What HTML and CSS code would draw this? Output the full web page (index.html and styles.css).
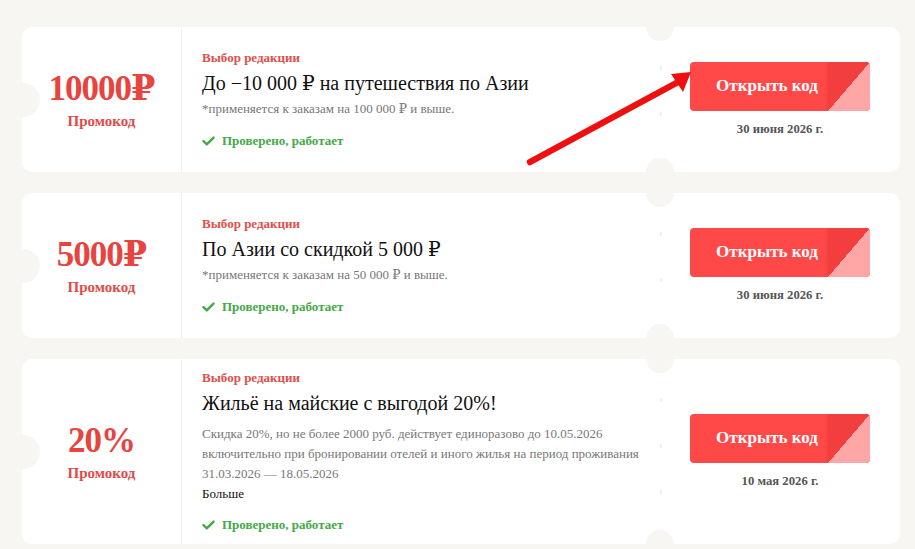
FILE: index.html
```html
<!DOCTYPE html>
<html lang="ru">
<head>
  <meta charset="UTF-8" />
  <meta name="viewport" content="width=device-width, initial-scale=1" />
  <title>Промокоды</title>
  <link rel="stylesheet" href="styles.css">
</head>
<body>

  <div class="coupons">

    <div class="coupon">
      <div class="coupon-value">
        <div class="amount">10000₽</div>
        <div class="kind">Промокод</div>
      </div>
      <div class="coupon-info">
        <div class="label">Выбор редакции</div>
        <div class="title">До −10 000 ₽ на путешествия по Азии</div>
        <div class="note">*применяется к заказам на 100 000 ₽ и выше.</div>
        <div class="checked">
          <svg width="13" height="10" viewBox="0 0 13 10" fill="none" stroke="currentColor" stroke-width="2.4" stroke-linecap="round" stroke-linejoin="round">
            <path d="M1.5 5.2 4.8 8.4 11.5 1.6"></path>
          </svg>
          Проверено, работает
        </div>
      </div>
      <div class="coupon-action">
        <button class="open-btn">Открыть код</button>
        <div class="expire">30 июня 2026 г.</div>
      </div>
    </div>

    <div class="coupon">
      <div class="coupon-value">
        <div class="amount">5000₽</div>
        <div class="kind">Промокод</div>
      </div>
      <div class="coupon-info">
        <div class="label">Выбор редакции</div>
        <div class="title">По Азии со скидкой 5 000 ₽</div>
        <div class="note">*применяется к заказам на 50 000 ₽ и выше.</div>
        <div class="checked">
          <svg width="13" height="10" viewBox="0 0 13 10" fill="none" stroke="currentColor" stroke-width="2.4" stroke-linecap="round" stroke-linejoin="round">
            <path d="M1.5 5.2 4.8 8.4 11.5 1.6"></path>
          </svg>
          Проверено, работает
        </div>
      </div>
      <div class="coupon-action">
        <button class="open-btn">Открыть код</button>
        <div class="expire">30 июня 2026 г.</div>
      </div>
    </div>

    <div class="coupon">
      <div class="coupon-value">
        <div class="amount">20%</div>
        <div class="kind">Промокод</div>
      </div>
      <div class="coupon-info">
        <div class="label">Выбор редакции</div>
        <div class="title">Жильё на майские с выгодой 20%!</div>
        <div class="desc">Скидка 20%, но не более 2000 руб. действует единоразово до 10.05.2026 включительно при бронировании отелей и иного жилья на период проживания 31.03.2026 — 18.05.2026</div>
        <div class="more">Больше</div>
        <div class="checked">
          <svg width="13" height="10" viewBox="0 0 13 10" fill="none" stroke="currentColor" stroke-width="2.4" stroke-linecap="round" stroke-linejoin="round">
            <path d="M1.5 5.2 4.8 8.4 11.5 1.6"></path>
          </svg>
          Проверено, работает
        </div>
      </div>
      <div class="coupon-action">
        <button class="open-btn">Открыть код</button>
        <div class="expire">10 мая 2026 г.</div>
      </div>
    </div>

    <!-- стрелка поверх первой карточки -->
    <svg class="pointer" width="915" height="549" viewBox="0 0 915 549">
      <line x1="530" y1="162" x2="680" y2="81" stroke="#ee1010" stroke-width="6.5" stroke-linecap="round"></line>
      <polygon points="691,72 671,74 683,92" fill="#ee1010"></polygon>
    </svg>

  </div>

</body>
</html>
```

FILE: styles.css
```css
* {
  margin: 0;
  padding: 0;
  box-sizing: border-box;
}
body {
  background: #f7f6f2;
  font-family: "Liberation Serif", "DejaVu Serif", serif;
  color: #111;
}
.coupons {
  position: relative;
  padding: 27px 15px 0 22px;
  display: flex;
  flex-direction: column;
  gap: 21px;
}
.coupon {
  position: relative;
  display: grid;
  grid-template-columns: 160px 1fr 240px;
  min-height: 145px;
  background: #fff;
  border-radius: 10px;
  overflow: hidden;
}
.coupon::before {
  content: "";
  position: absolute;
  left: -16px;
  top: 50%;
  width: 34px;
  height: 34px;
  margin-top: -17px;
  border-radius: 50%;
  background: #f7f6f2;
}
.coupon-value {
  display: flex;
  flex-direction: column;
  align-items: center;
  justify-content: center;
  border-right: 1px solid #f0efeb;
  color: #e8443f;
  font-weight: bold;
}
.amount {
  font-size: 35px;
  line-height: 40px;
  letter-spacing: -1px;
}
.kind {
  margin-top: 3px;
  font-size: 15px;
  line-height: 18px;
  color: #df4b47;
}
.coupon-info {
  display: flex;
  flex-direction: column;
  justify-content: center;
  padding: 10px 20px;
}
.label {
  font-size: 13px;
  line-height: 18px;
  font-weight: bold;
  color: #e0504c;
}
.title {
  margin-top: 3px;
  font-size: 20px;
  line-height: 26px;
  color: #111;
}
.note {
  margin-top: 3px;
  font-size: 13px;
  line-height: 20px;
  color: #777;
}
.desc {
  margin-top: 8px;
  font-size: 13px;
  line-height: 20px;
  color: #777;
}
.more {
  margin-top: 1px;
  font-size: 13px;
  line-height: 18px;
  color: #111;
}
.checked {
  margin-top: 13px;
  display: flex;
  align-items: center;
  gap: 7px;
  font-size: 13px;
  line-height: 18px;
  font-weight: bold;
  color: #45a848;
}
.checked svg {
  flex-shrink: 0;
}
.coupon-action {
  position: relative;
  display: flex;
  flex-direction: column;
  align-items: center;
  justify-content: center;
  background-image: radial-gradient(circle, #f0efeb 2px, transparent 2.6px);
  background-size: 6px 46px;
  background-position: -3px 18px;
  background-repeat: repeat-y;
}
.coupon-action::before,
.coupon-action::after {
  content: "";
  position: absolute;
  left: -14px;
  width: 28px;
  height: 28px;
  border-radius: 50%;
  background: #f7f6f2;
}
.coupon-action::before {
  top: -14px;
}
.coupon-action::after {
  bottom: -14px;
}
.open-btn {
  position: relative;
  overflow: hidden;
  width: 180px;
  height: 49px;
  padding-right: 26px;
  border: none;
  border-radius: 4px;
  background: #ff4949;
  color: #fff;
  font-family: inherit;
  font-size: 17px;
  font-weight: bold;
  cursor: pointer;
}
.open-btn::after {
  content: "";
  position: absolute;
  right: 0;
  top: 0;
  bottom: 0;
  width: 42px;
  background: linear-gradient(to bottom right, #f23e3e 50%, #ffa6a6 50%);
  box-shadow: -1px 0 3px rgba(180, 0, 0, 0.15);
}
.expire {
  margin-top: 9px;
  font-size: 12.7px;
  line-height: 18px;
  font-weight: bold;
  color: #555;
}
.pointer {
  position: absolute;
  left: 0;
  top: 0;
  pointer-events: none;
}
```
